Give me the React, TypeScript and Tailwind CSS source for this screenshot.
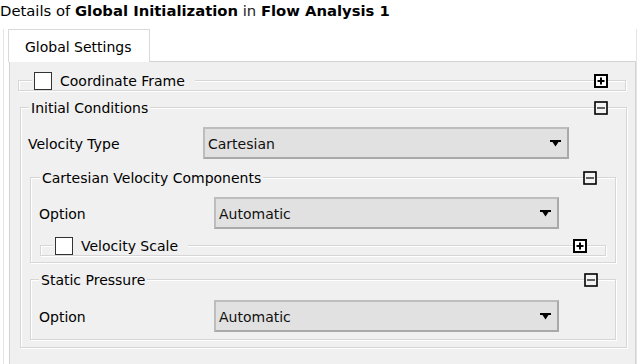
import React from "react";

function PlusIcon() {
  return (
    <svg width="14" height="14" viewBox="0 0 14 14" className="shrink-0 relative z-10">
      <rect x="1" y="1" width="12" height="12" fill="#ffffff" stroke="#000" strokeWidth="2" />
      <path d="M3.5 7H10.5M7 3.5V10.5" stroke="#000" strokeWidth="2" />
    </svg>
  );
}

function MinusIcon() {
  return (
    <svg width="14" height="14" viewBox="0 0 14 14" className="shrink-0 relative z-10">
      <rect x="1" y="1" width="12" height="12" fill="#f4f4f4" stroke="#000" strokeWidth="1.6" />
      <path d="M3 7H11" stroke="#000" strokeWidth="1.2" />
    </svg>
  );
}

function Checkbox() {
  return <div className="w-[18px] h-[18px] bg-white border border-[#333] shrink-0" />;
}

function Select({ value }: { value: string }) {
  return (
    <div className="flex-1 h-[32px] bg-[#e1e1e1] border-2 border-[#bdbdbd] border-r-[#a9a9a9] border-b-[#a9a9a9] flex items-center justify-between pl-[3px] pr-[6px]">
      <span className="text-[#111] pt-[1px]">{value}</span>
      <svg width="11" height="7" viewBox="0 0 11 7">
        <path d="M0 0H11V2H8.5L5.5 6.5L2.5 2H0Z" fill="#000" />
      </svg>
    </div>
  );
}

const box =
  "border border-[#d6d6d6] shadow-[inset_1px_1px_0_#ffffff,1px_1px_0_#ffffff]";

export default function App() {
  return (
    <div className="w-[640px] h-[364px] bg-white overflow-hidden flex flex-col font-['DejaVu_Sans',Verdana,sans-serif] text-[14px] leading-none text-black">
      <div className="h-[25px] flex items-center whitespace-nowrap pl-0 pb-[2px] text-[14.8px]">
        <span>Details of&nbsp;</span>
        <span className="font-bold">Global Initialization</span>
        <span className="text-[#222]">&nbsp;in&nbsp;</span>
        <span className="font-bold">Flow Analysis 1</span>
      </div>
      <div className="flex-1 flex flex-col ml-[3px] mr-[3px] mt-[4px] border-l border-r border-[#e4e4e4]">
        <div className="flex">
          <div className="ml-[4px] w-[142px] h-[33px] bg-white border border-b-0 border-[#d9d9d9] pl-[16px] flex items-center pt-[2px] relative z-10 -mb-px">
            Global Settings
          </div>
        </div>
        <div className="flex-1 ml-[5px] bg-[#f0f0f0] border-t border-l border-r border-[#d3d3d3] flex flex-col">
          {/* Coordinate Frame */}
          <div className={`mt-[18px] ml-[8px] mr-[9px] ${box}`}>
            <div className="h-[18px] -mt-[9px] flex items-center pl-[13px] pr-[17px]">
              <div className="flex items-center bg-[#f0f0f0] pl-[2px] pr-[10px] h-full">
                <Checkbox />
                <span className="ml-[8px]">Coordinate Frame</span>
              </div>
              <div className="flex-1" />
              <PlusIcon />
            </div>
          </div>

          {/* Initial Conditions */}
          <div className={`mt-[16px] ml-[10px] mr-[8px] pb-[7px] ${box}`}>
            <div className="h-[18px] -mt-[9px] flex items-center pr-[18px]">
              <span className="ml-[8px] px-[2px] bg-[#f0f0f0] h-full flex items-center">Initial Conditions</span>
              <div className="flex-1" />
              <MinusIcon />
            </div>
            <div className="flex items-center mt-[10px] pl-[7px] pr-[57px]">
              <div className="w-[175px] shrink-0 pt-[1px]">Velocity Type</div>
              <Select value="Cartesian" />
            </div>

            {/* Cartesian Velocity Components */}
            <div className={`mt-[18px] ml-[9px] mr-[10px] pb-[6px] ${box}`}>
              <div className="h-[18px] -mt-[9px] flex items-center pr-[18px]">
                <span className="ml-[9px] px-[2px] bg-[#f0f0f0] h-full flex items-center">Cartesian Velocity Components</span>
                <div className="flex-1" />
                <MinusIcon />
              </div>
              <div className="flex items-center mt-[10px] pl-[8px] pr-[56px]">
                <div className="w-[175px] shrink-0 pt-[1px]">Option</div>
                <Select value="Automatic" />
              </div>
              <div className={`mt-[16px] ml-[9px] mr-[9px] ${box}`}>
                <div className="h-[18px] -mt-[9px] flex items-center pl-[12px] pr-[18px]">
                  <div className="flex items-center bg-[#f0f0f0] pl-[2px] pr-[10px] h-full">
                    <Checkbox />
                    <span className="ml-[8px]">Velocity Scale</span>
                  </div>
                  <div className="flex-1" />
                  <PlusIcon />
                </div>
              </div>
            </div>

            {/* Static Pressure */}
            <div className={`mt-[16px] ml-[9px] mr-[10px] pb-[7px] ${box}`}>
              <div className="h-[18px] -mt-[9px] flex items-center pr-[17px]">
                <span className="ml-[8px] px-[2px] bg-[#f0f0f0] h-full flex items-center">Static Pressure</span>
                <div className="flex-1" />
                <MinusIcon />
              </div>
              <div className="flex items-center mt-[11px] pl-[8px] pr-[56px]">
                <div className="w-[175px] shrink-0 pt-[1px]">Option</div>
                <Select value="Automatic" />
              </div>
            </div>
          </div>
        </div>
      </div>
    </div>
  );
}
